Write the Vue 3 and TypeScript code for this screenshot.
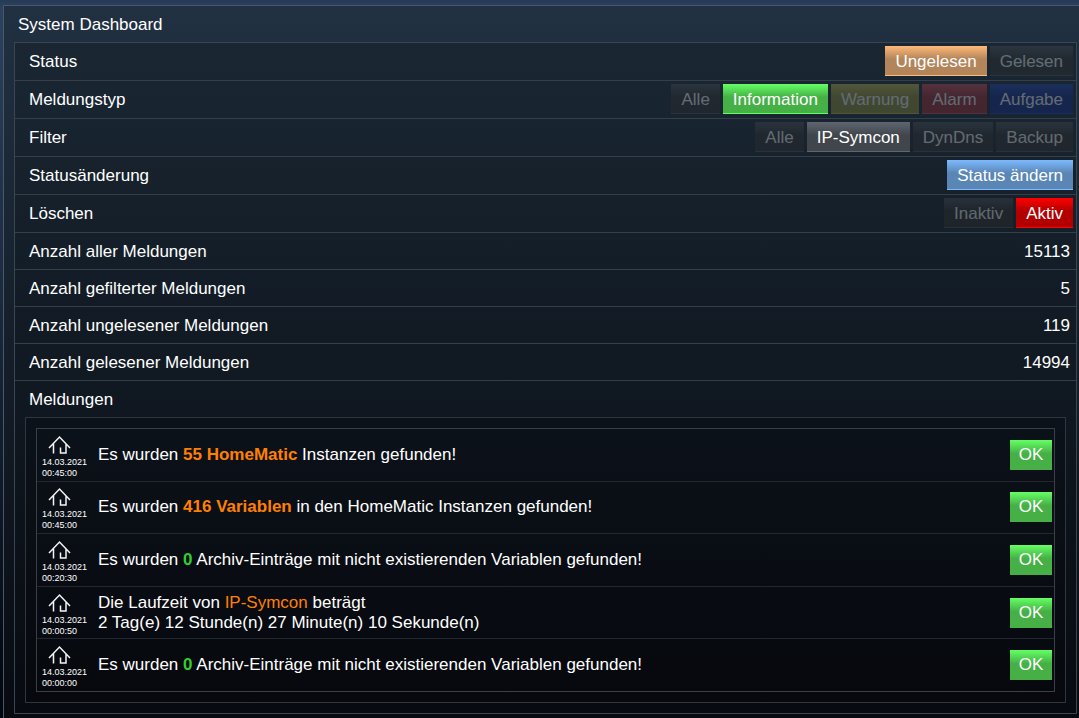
<script setup lang="ts">
import { ref } from 'vue'

interface Option { label: string; tone: string }
interface Group { label: string; options: Option[] }
interface Message { time: string; before: string; mark: string; tone: string; after: string; extra?: string }

const groups: Group[] = [
  { label: 'Status', options: [{ label: 'Ungelesen', tone: 'orange' }, { label: 'Gelesen', tone: 'grey' }] },
  {
    label: 'Meldungstyp',
    options: [
      { label: 'Alle', tone: 'grey' },
      { label: 'Information', tone: 'green' },
      { label: 'Warnung', tone: 'yellow' },
      { label: 'Alarm', tone: 'pink' },
      { label: 'Aufgabe', tone: 'navy' },
    ],
  },
  {
    label: 'Filter',
    options: [
      { label: 'Alle', tone: 'grey' },
      { label: 'IP-Symcon', tone: 'grey' },
      { label: 'DynDns', tone: 'grey' },
      { label: 'Backup', tone: 'grey' },
    ],
  },
  { label: 'Statusänderung', options: [{ label: 'Status ändern', tone: 'blue' }] },
  { label: 'Löschen', options: [{ label: 'Inaktiv', tone: 'grey' }, { label: 'Aktiv', tone: 'red' }] },
]

const selected = ref<number[]>([0, 1, 1, 0, 1])

const counts = [
  { label: 'Anzahl aller Meldungen', value: 15113 },
  { label: 'Anzahl gefilterter Meldungen', value: 5 },
  { label: 'Anzahl ungelesener Meldungen', value: 119 },
  { label: 'Anzahl gelesener Meldungen', value: 14994 },
]

const messages: Message[] = [
  { time: '00:45:00', before: 'Es wurden ', mark: '55 HomeMatic', tone: 'hot strong', after: ' Instanzen gefunden!' },
  { time: '00:45:00', before: 'Es wurden ', mark: '416 Variablen', tone: 'hot strong', after: ' in den HomeMatic Instanzen gefunden!' },
  { time: '00:20:30', before: 'Es wurden ', mark: '0', tone: 'good strong', after: ' Archiv-Einträge mit nicht existierenden Variablen gefunden!' },
  { time: '00:00:50', before: 'Die Laufzeit von ', mark: 'IP-Symcon', tone: 'hot', after: ' beträgt', extra: '2 Tag(e) 12 Stunde(n) 27 Minute(n) 10 Sekunde(n)' },
  { time: '00:00:00', before: 'Es wurden ', mark: '0', tone: 'good strong', after: ' Archiv-Einträge mit nicht existierenden Variablen gefunden!' },
]
</script>

<template>
  <main class="panel">
    <h1>System Dashboard</h1>
    <section class="box">
      <div v-for="(group, g) in groups" :key="group.label" class="row tall" role="group" :aria-label="group.label">
        <span>{{ group.label }}</span>
        <div class="options">
          <button
            v-for="(option, o) in group.options"
            :key="option.label"
            type="button"
            :class="['btn', option.tone, { on: selected[g] === o }]"
            :aria-pressed="selected[g] === o"
            @click="selected[g] = o"
          >{{ option.label }}</button>
        </div>
      </div>
      <div v-for="count in counts" :key="count.label" class="row">
        <span>{{ count.label }}</span>
        <span class="value">{{ count.value }}</span>
      </div>
      <h2 class="row">Meldungen</h2>
      <div class="frame">
        <table>
          <tbody>
            <tr v-for="(message, m) in messages" :key="m">
              <td class="stamp">
                <svg viewBox="0 0 25 26" width="25" height="26" aria-hidden="true">
                  <path d="M2 17 12.500 6 23 17M6.500 12.500V22.500M19 13V22H13.500V16.500" />
                </svg>
                <time>14.03.2021<br />{{ message.time }}</time>
              </td>
              <td class="text">
                {{ message.before }}<span :class="message.tone">{{ message.mark }}</span>{{ message.after }}
                <template v-if="message.extra"><br />{{ message.extra }}</template>
              </td>
              <td class="action"><button type="button" class="btn green ok">OK</button></td>
            </tr>
          </tbody>
        </table>
      </div>
    </section>
  </main>
</template>

<style>
body {
  background: #01050d;
}
#app {
  overflow: hidden;
  background: linear-gradient(#263a55 0, #2b4260 8px, #01050d 718px);
}
</style>

<style scoped>
.panel {
  margin: 5px 0 0 3px;
  padding: 0 2px 10px 10px;
  border: 1px solid #4c5866;
  border-right: 0;
  border-bottom: 0;
  background: linear-gradient(#213142, #070a10);
  color: #fff;
  font: 17px/20px "Liberation Sans", Arial, sans-serif;
}
h1,
h2 {
  margin: 0;
  font: inherit;
}
h1 {
  padding: 9px 4px 7px;
}
.box {
  border: 1px solid #3c4650;
  background: linear-gradient(#1a2733, #070a10);
}
.row {
  display: flex;
  align-items: center;
  justify-content: space-between;
  box-sizing: border-box;
  height: 37px;
  padding: 2px 6px 0 14px;
  border-bottom: 1px solid #353f4a;
}
.tall {
  align-items: flex-start;
  height: 38px;
  padding: 3px 3px 0 14px;
  line-height: 32px;
}
h2.row {
  height: 36px;
  border: 0;
}
.options {
  display: flex;
  gap: 3px;
}
.btn {
  height: 30px;
  padding: 2px 10px 0;
  border: 0;
  border-bottom: 1px solid var(--top);
  border-radius: 0;
  background: linear-gradient(var(--top), var(--base) 45%);
  color: #fff;
  font: inherit;
  line-height: 20px;
  opacity: 0.32;
  cursor: pointer;
}
.on,
.ok {
  opacity: 1;
}
.grey {
  --top: #60666f;
  --base: #40464c;
}
.btn.grey:not(.on) {
  --top: #50565c;
  --base: #34302e;
}
.orange {
  --top: #ffb978;
  --base: #b2855a;
}
.green {
  --top: #64ff64;
  --base: #46b046;
}
.yellow {
  --top: #c8be50;
  --base: #969032;
}
.pink {
  --top: #d2505a;
  --base: #a02832;
}
.navy {
  --top: #1e46b4;
  --base: #14288c;
}
.blue {
  --top: #7dbaff;
  --base: #5a86b6;
}
.red {
  --top: #ff0000;
  --base: #b20000;
}
.frame {
  margin: 0 10px 10px;
  padding: 10px;
  border: 1px solid #2f363f;
  background: linear-gradient(#0c121a, #06080d);
}
table {
  width: 100%;
  height: 264px;
  border: 1px solid #3a4047;
  border-spacing: 0;
}
td {
  padding: 0;
  border-bottom: 1px solid #23282f;
}
tr:last-child td {
  border-bottom: 0;
}
.stamp {
  width: 61px;
  padding-left: 5px;
  box-sizing: border-box;
  font-size: 9px;
  line-height: 11px;
}
.stamp svg {
  display: block;
  margin-left: 5px;
  fill: none;
  stroke: #f2f4f5;
  stroke-width: 1.5;
}
time {
  display: block;
}
.action {
  width: 44px;
  padding-right: 2px;
  text-align: right;
}
.ok {
  width: 42px;
  padding: 0;
  border: 0;
}
.strong {
  font-weight: bold;
}
.hot {
  color: #ff8000;
}
.good {
  color: #32cd32;
}
</style>
